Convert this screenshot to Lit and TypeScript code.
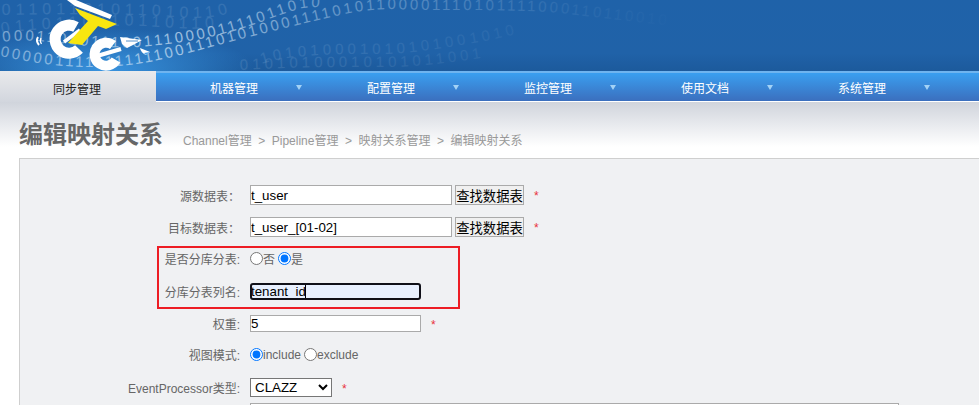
import { LitElement, html, css, svg } from "lit";
import { customElement } from "lit/decorators.js";

// path, digits, font size, letter spacing, paint
const ROWS: [string, string, number, number, string][] = [
  ["M3 42 C40 36 90 52 150 46 S240 30 280 15 S320 11 345 12", "000110101110011100001111011010", 15, 2.8, "url(#fb)"],
  ["M0 56 C30 62 60 68 100 67 S170 58 207 48 S300 24 340 15 S400 10 440 10 S540 10 570 14 S660 24 720 32", "000001111111111100111010100011110101100001110101111000110110010", 15, 2.8, "url(#fb)"],
  ["M262 64 C290 54 340 54 375 54 S430 50 473 43 S530 28 590 22", "101010001010101001010", 15, 4, "url(#fd)"],
  ["M240 70 C290 67 340 67 380 67 S450 63 500 55 S570 45 620 39", "01010100010101011001", 15, 4, "url(#fd)"],
  ["M2 15 C40 14 90 14 135 15 S200 22 230 13", "01101101011010110", 16, 5, "url(#fd)"],
  ["M2 34 C15 30 60 28 110 26 S180 32 225 27", "0110110010110110", 16, 5, "url(#fd)"],
];

const TABS = ["机器管理", "配置管理", "监控管理", "使用文档", "系统管理"];

@customElement("app-root")
export class AppRoot extends LitElement {
  static styles = css`
    :host {
      display: block;
      height: 405px;
      overflow: hidden;
      background: #fff;
      font-family: "Liberation Sans", "Noto Sans CJK SC", sans-serif;
      font-size: 12px;
    }
    .banner {
      display: block;
      height: 71px;
      width: 100%;
    }
    .nav {
      display: flex;
      height: 31px;
      border-bottom: 1px solid #fff;
      box-sizing: border-box;
      background: linear-gradient(#3a9ff0, #3b6fbe);
      border-top: 2px solid #6fb4ef;
    }
    .tab {
      display: flex;
      align-items: center;
      box-sizing: border-box;
      width: 157px;
      padding: 4px 0 0 54px;
      color: #fff;
      line-height: 24px;
    }
    .tab.active {
      width: 156px;
      margin-top: -2px;
      margin-bottom: -1px;
      height: 31px;
      padding: 6px 0 0 53px;
      background: linear-gradient(#e9eaec, #d2d6de);
      color: #222;
    }
    .caret {
      width: 0;
      height: 0;
      margin-left: 38px;
      margin-top: -3px;
      border-left: 3px solid transparent;
      border-right: 3px solid transparent;
      border-top: 5px solid #a3d2f6;
    }
    .head {
      display: flex;
      align-items: flex-start;
      height: 56px;
      box-sizing: border-box;
      padding: 17px 0 0 19px;
      background: linear-gradient(#d0d4dc, #fff 80%);
    }
    h1 {
      margin: 0;
      font-size: 24px;
      font-weight: bold;
      line-height: 32px;
      color: #666;
    }
    .crumbs {
      margin: 14px 0 0 20px;
      color: #999;
      font-size: 12px;
      line-height: 16px;
    }
    .crumbs i {
      font-style: normal;
      margin: 0 6.5px;
    }
    .panel {
      position: relative;
      margin-left: 19px;
      border-top: 1px solid #cfcfcf;
      border-left: 1px solid #cfcfcf;
      background: #f0f1f3;
      padding-top: 26px;
      height: 300px;
    }
    .row {
      display: flex;
      align-items: center;
    }
    .label {
      width: 220px;
      text-align: right;
      color: #666;
      flex: none;
      margin-right: 10px;
      white-space: nowrap;
    }
    .r1 { height: 20px; margin-bottom: 12px; }
    .r2 { height: 20px; margin-bottom: 12px; }
    .r3 { height: 18px; margin-bottom: 16px; }
    .r4 { height: 17px; margin-bottom: 15px; }
    .r5 { height: 17px; margin-bottom: 15px; }
    .r6 { height: 14px; margin-bottom: 17px; }
    .r7 { height: 19px; margin-bottom: 6px; }
    input[type="text"] {
      box-sizing: border-box;
      margin: 0;
      padding: 0;
      border: 1px solid #aaa;
      background: #fff;
      font: 13.33px "Liberation Sans", "Noto Sans CJK SC", sans-serif;
      color: #000;
      outline: none;
      height: 20px;
    }
    .wide { width: 202px; }
    .mid { width: 171px; height: 17px !important; }
    .focused {
      border: 2px solid #101018 !important;
      border-radius: 3px;
      background: #e8f0fe !important;
      text-indent: -1px;
      width: 171px;
      height: 17px !important;
    }
    .caretbox {
      position: relative;
      display: flex;
    }
    .textcaret {
      position: absolute;
      left: 55px;
      top: 2px;
      width: 1px;
      height: 13px;
      background: #000;
    }
    button {
      box-sizing: border-box;
      margin: 0 0 0 3px;
      width: 69px;
      height: 20px;
      padding: 0;
      border: 1px solid #aaa;
      background: #f0f0f0;
      color: #000;
      font: 13.33px "Liberation Sans", "Noto Sans CJK SC", sans-serif;
      white-space: nowrap;
    }
    .star {
      color: #e8323c;
      font-size: 12px;
      margin: 2px 0 0 10px;
    }
    .radios {
      display: flex;
      align-items: center;
      color: #666;
      white-space: nowrap;
    }
    .r6 .radios {
      padding-top: 1px;
    }
    input[type="radio"] {
      width: 13px;
      height: 13px;
      margin: 0;
    }
    .radios span + input {
      margin-left: 3px;
    }
    select {
      box-sizing: border-box;
      width: 82px;
      height: 19px;
      margin: 0;
      padding: 0;
      border: 1px solid #767676;
      background: #fff;
      color: #000;
      font: 13.33px "Liberation Sans", sans-serif;
    }
    .bigbox {
      box-sizing: border-box;
      margin-left: 230px;
      width: 649px;
      height: 60px;
      border: 1px solid #aaa;
      background: #fff;
    }
    .mark {
      position: absolute;
      left: 137px;
      top: 87px;
      box-sizing: border-box;
      width: 303px;
      height: 63px;
      border: 2px solid #ed1c24;
      pointer-events: none;
    }
  `;

  banner() {
    return html`<svg class="banner" viewBox="0 0 979 71" preserveAspectRatio="none">
      <defs>
        <linearGradient id="bg" x1="0" y1="0" x2="0" y2="1">
          <stop offset="0" stop-color="#1f62a9" />
          <stop offset="0.75" stop-color="#2062a8" />
          <stop offset="1" stop-color="#1c5a9c" />
        </linearGradient>
        <radialGradient id="glow" cx="0.5" cy="0.5" r="0.5">
          <stop offset="0" stop-color="#3a96e2" stop-opacity="0.95" />
          <stop offset="1" stop-color="#3a96e2" stop-opacity="0" />
        </radialGradient>
        <linearGradient id="fb" gradientUnits="userSpaceOnUse" x1="0" y1="0" x2="720" y2="0">
          <stop offset="0" stop-color="#cfe3f5" stop-opacity="0.5" />
          <stop offset="0.25" stop-color="#cfe3f5" stop-opacity="0.72" />
          <stop offset="0.42" stop-color="#cfe3f5" stop-opacity="0.45" />
          <stop offset="0.6" stop-color="#cfe3f5" stop-opacity="0.28" />
          <stop offset="0.78" stop-color="#cfe3f5" stop-opacity="0.08" />
          <stop offset="0.95" stop-color="#cfe3f5" stop-opacity="0" />
        </linearGradient>
        <linearGradient id="fd" gradientUnits="userSpaceOnUse" x1="0" y1="0" x2="640" y2="0">
          <stop offset="0" stop-color="#cfe3f5" stop-opacity="0.13" />
          <stop offset="0.5" stop-color="#cfe3f5" stop-opacity="0.12" />
          <stop offset="0.75" stop-color="#cfe3f5" stop-opacity="0.07" />
          <stop offset="1" stop-color="#cfe3f5" stop-opacity="0.01" />
        </linearGradient>
      </defs>
      <rect width="979" height="71" fill="url(#bg)" />
      <ellipse cx="105" cy="70" rx="150" ry="42" fill="url(#glow)" />
      ${ROWS.map(
        ([d, t, s, l, f], i) => svg`
          <path id=${"row" + i} d=${d} fill="none" />
          <text fill=${f} font-size=${s} letter-spacing=${l} font-family="Liberation Sans">
            <textPath href=${"#row" + i}>${t}</textPath>
          </text>`
      )}
      <!-- logo -->
      <path d="M38 37 Q35.5 41 39 45" fill="none" stroke="#fff" stroke-width="2" />
      <path d="M41 38 Q39.5 41 41.5 44" fill="none" stroke="#fff" stroke-width="1.2" />
      <path d="M76 27 A14 14 0 1 0 79 49" fill="none" stroke="#fff" stroke-width="11" />
      <path d="M64 42 L80 30" fill="none" stroke="#fff" stroke-width="3.5" />
      <path d="M67 0 L76 0 L112 15 L110 19 L75 6 Z" fill="#fff" />
      <path d="M75 8 L117 24 L106 29 L98 26 L82 45 L68 43 L88 21 L80 15 Z" fill="#f8e610" />
      <path d="M113 45 A11.5 11.5 0 1 0 116 60" fill="none" stroke="#fff" stroke-width="10" />
      <path d="M97 56 L121 49" fill="none" stroke="#fff" stroke-width="4" />
      <path d="M120 37 L142 40 L133 45 L127 48 L122 44 Z" fill="#fff" />
      <path d="M126 41 L138 41" fill="none" stroke="#2a74bc" stroke-width="0.8" />
      <path d="M140 48 L150 52 L146 55 Q141 53 140 48 Z" fill="#fff" />
      <path d="M144 53 L150 52 L146 55 Z" fill="#4ba0e8" />
    </svg>`;
  }

  render() {
    return html`
      ${this.banner()}
      <div class="nav">
        <div class="tab active">同步管理</div>
        ${TABS.map((t) => html`<div class="tab">${t}<span class="caret"></span></div>`)}
      </div>
      <div class="head">
        <h1>编辑映射关系</h1>
        <div class="crumbs">Channel管理<i>&gt;</i>Pipeline管理<i>&gt;</i>映射关系管理<i>&gt;</i>编辑映射关系</div>
      </div>
      <div class="panel">
        <div class="row r1">
          <div class="label">源数据表：</div>
          <input type="text" class="wide" .value=${"t_user"} />
          <button>查找数据表</button><span class="star">*</span>
        </div>
        <div class="row r2">
          <div class="label">目标数据表：</div>
          <input type="text" class="wide" .value=${"t_user_[01-02]"} />
          <button>查找数据表</button><span class="star">*</span>
        </div>
        <div class="row r3">
          <div class="label">是否分库分表:</div>
          <div class="radios">
            <input type="radio" name="a" /><span>否</span>
            <input type="radio" name="a" checked /><span>是</span>
          </div>
        </div>
        <div class="row r4">
          <div class="label">分库分表列名:</div>
          <div class="caretbox">
            <input type="text" class="focused" .value=${"tenant_id"} />
            <span class="textcaret"></span>
          </div>
        </div>
        <div class="row r5">
          <div class="label">权重:</div>
          <input type="text" class="mid" .value=${"5"} /><span class="star">*</span>
        </div>
        <div class="row r6">
          <div class="label">视图模式:</div>
          <div class="radios">
            <input type="radio" name="b" checked /><span>include</span>
            <input type="radio" name="b" /><span>exclude</span>
          </div>
        </div>
        <div class="row r7">
          <div class="label">EventProcessor类型:</div>
          <select><option>CLAZZ</option></select><span class="star">*</span>
        </div>
        <div class="bigbox"></div>
        <div class="mark"></div>
      </div>
    `;
  }
}
